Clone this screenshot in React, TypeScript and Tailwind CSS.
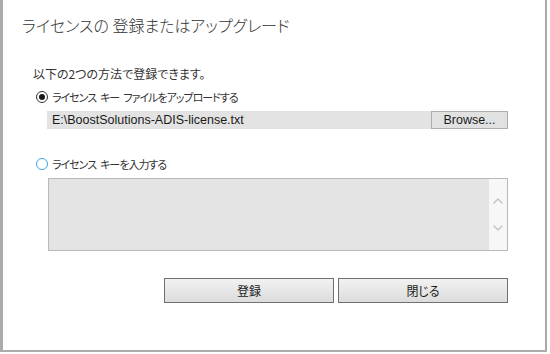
import { ChevronUp, ChevronDown } from "lucide-react";

const jp = "font-['Noto_Sans_CJK_JP','Noto_Sans',sans-serif] [font-feature-settings:'palt']";

function Radio({ checked }: { checked: boolean }) {
  if (checked) {
    return (
      <span className="w-[12px] h-[12px] rounded-full border border-[#333333] bg-white flex items-center justify-center">
        <span className="w-[6px] h-[6px] rounded-full bg-[#1a1a1a]" />
      </span>
    );
  }
  return <span className="w-[12px] h-[12px] rounded-full border-[1.5px] border-[#3ba4e4] bg-white" />;
}

// 単語の間のスペース
const Gap = () => <span className="inline-block w-[4px]" />;

export default function App() {
  return (
    <div className="w-[550px] h-[354px] bg-white overflow-hidden">
      <div className="w-[547px] h-[352px] bg-white border-l-[3px] border-r-2 border-b-2 border-[#ababab] flex flex-col">
        {/* タイトル */}
        <div className={`${jp} h-[50px] pl-[19px] pt-[13px] text-[16px] font-light leading-[24px] text-[#333333]`}>
          ライセンスの 登録またはアップグレード
        </div>

        <div className="pl-[30px] pr-[37px] flex flex-col">
          <div className={`${jp} mt-[16px] h-[16px] text-[12px] leading-[16px] text-[#333333]`}>
            以下の2つの方法で登録できます。
          </div>

          <label className="mt-[7px] h-[16px] flex items-center gap-[4px] pl-[3px]">
            <Radio checked />
            <span className={`${jp} text-[11px] tracking-[-1px] leading-[16px] text-[#333333]`}>
              ライセンス<Gap />キー<Gap />ファイルをアップロードする
            </span>
          </label>

          <div className="mt-[6px] ml-[14px] h-[18px] flex">
            <div className="flex-1 bg-[#e3e3e3] border border-[#e3e3e3] pl-[4px] font-['Liberation_Sans',Arial,sans-serif] text-[12.5px] leading-[16px] text-[#1a1a1a]">
              E:\BoostSolutions-ADIS-license.txt
            </div>
            <button className="w-[77px] bg-[#e1e1e1] border border-[#adadad] font-['Liberation_Sans',Arial,sans-serif] text-[12.5px] leading-[16px] text-[#1a1a1a]">
              Browse...
            </button>
          </div>

          <label className="mt-[27px] h-[16px] flex items-center gap-[4px] pl-[3px]">
            <Radio checked={false} />
            <span className={`${jp} text-[11px] tracking-[-1px] leading-[16px] text-[#333333]`}>
              ライセンス<Gap />キーを入力する
            </span>
          </label>

          <div className="mt-[6px] ml-[15px] h-[73px] border border-[#b9b9b9] bg-[#e4e4e4] flex justify-end">
            <div className="w-[18px] bg-[#f7f7f7] flex flex-col items-center justify-between py-[14px] text-[#c2c2c2]">
              <ChevronUp size={16} strokeWidth={2} />
              <ChevronDown size={16} strokeWidth={2} />
            </div>
          </div>

          <div className="mt-[27px] ml-[131px] flex gap-[4px]">
            <button className={`${jp} w-[170px] h-[25px] border border-[#707070] bg-gradient-to-b from-[#f2f2f2] to-[#dcdcdc] text-[12px] text-[#1a1a1a]`}>
              登録
            </button>
            <button className={`${jp} w-[170px] h-[25px] border border-[#707070] bg-gradient-to-b from-[#f2f2f2] to-[#dcdcdc] text-[12px] text-[#1a1a1a]`}>
              閉じる
            </button>
          </div>
        </div>
      </div>
    </div>
  );
}
